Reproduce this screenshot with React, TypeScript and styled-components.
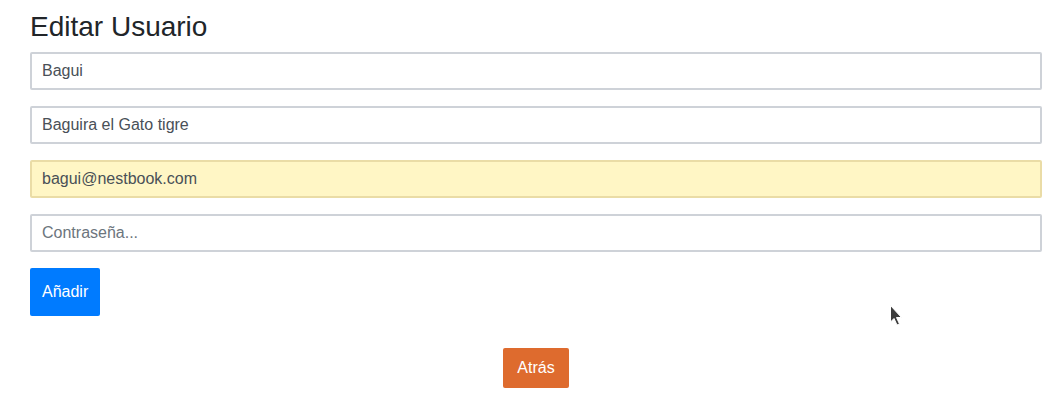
import React from "react";
import styled, { createGlobalStyle } from "styled-components";

const Global = createGlobalStyle`
  html, body { margin: 0; padding: 0; background: #fff; }
  body { font-family: "Liberation Sans", Arial, sans-serif; }
`;

const Page = styled.div`
  position: relative;
  width: 1064px;
  height: 405px;
  overflow: hidden;
`;

const Container = styled.div`
  width: 1012px;
  padding-left: 30px;
  display: flex;
  flex-direction: column;
`;

const Title = styled.h2`
  margin: 10px 0 8px 0;
  font-size: 28px;
  line-height: 34px;
  font-weight: 400;
  color: #212529;
`;

const Form = styled.form`
  display: flex;
  flex-direction: column;
  gap: 16px;
  align-items: flex-start;
`;

const Input = styled.input<{ $autofill?: boolean }>`
  box-sizing: border-box;
  width: 100%;
  height: 38px;
  padding: 0 10px;
  border: 2px solid ${(p) => (p.$autofill ? "#eadca6" : "#ced2d8")};
  border-radius: 2px;
  background: ${(p) => (p.$autofill ? "#fff6c5" : "#fff")};
  font-family: "Liberation Sans", Arial, sans-serif;
  font-size: 16px;
  color: #495057;
  outline: none;
  &::placeholder { color: #6c757d; }
`;

const Button = styled.button<{ $color: string; $h: number; $px: number }>`
  box-sizing: border-box;
  height: ${(p) => p.$h}px;
  padding: 0 ${(p) => p.$px}px;
  border: none;
  border-radius: 2px;
  background: ${(p) => p.$color};
  color: #fff;
  font-family: "Liberation Sans", Arial, sans-serif;
  font-size: 16px;
`;

const Footer = styled.div`
  display: flex;
  justify-content: center;
  margin-top: 32px;
`;

const Cursor = styled.svg`
  position: absolute;
  left: 889px;
  top: 304px;
`;

export default function App() {
  return (
    <Page>
      <Global />
      <Container>
        <Title>Editar Usuario</Title>
        <Form onSubmit={(e) => e.preventDefault()}>
          <Input defaultValue="Bagui" />
          <Input defaultValue="Baguira el Gato tigre" />
          <Input $autofill defaultValue="bagui@nestbook.com" />
          <Input type="password" placeholder="Contraseña..." />
          <Button $color="#007bff" $h={48} $px={12}>Añadir</Button>
        </Form>
        <Footer>
          <Button type="button" $color="#de6b2e" $h={40} $px={14.5}>Atrás</Button>
        </Footer>
      </Container>
      <Cursor width="16" height="24" viewBox="0 0 16 24">
        <path d="M1.5 1.5 L1.5 18 L5 14.5 L8 21 L10.5 20 L7.5 13.5 L12.5 13.5 Z" fill="#3c3c3c" stroke="#fff" strokeWidth="1" />
      </Cursor>
    </Page>
  );
}
